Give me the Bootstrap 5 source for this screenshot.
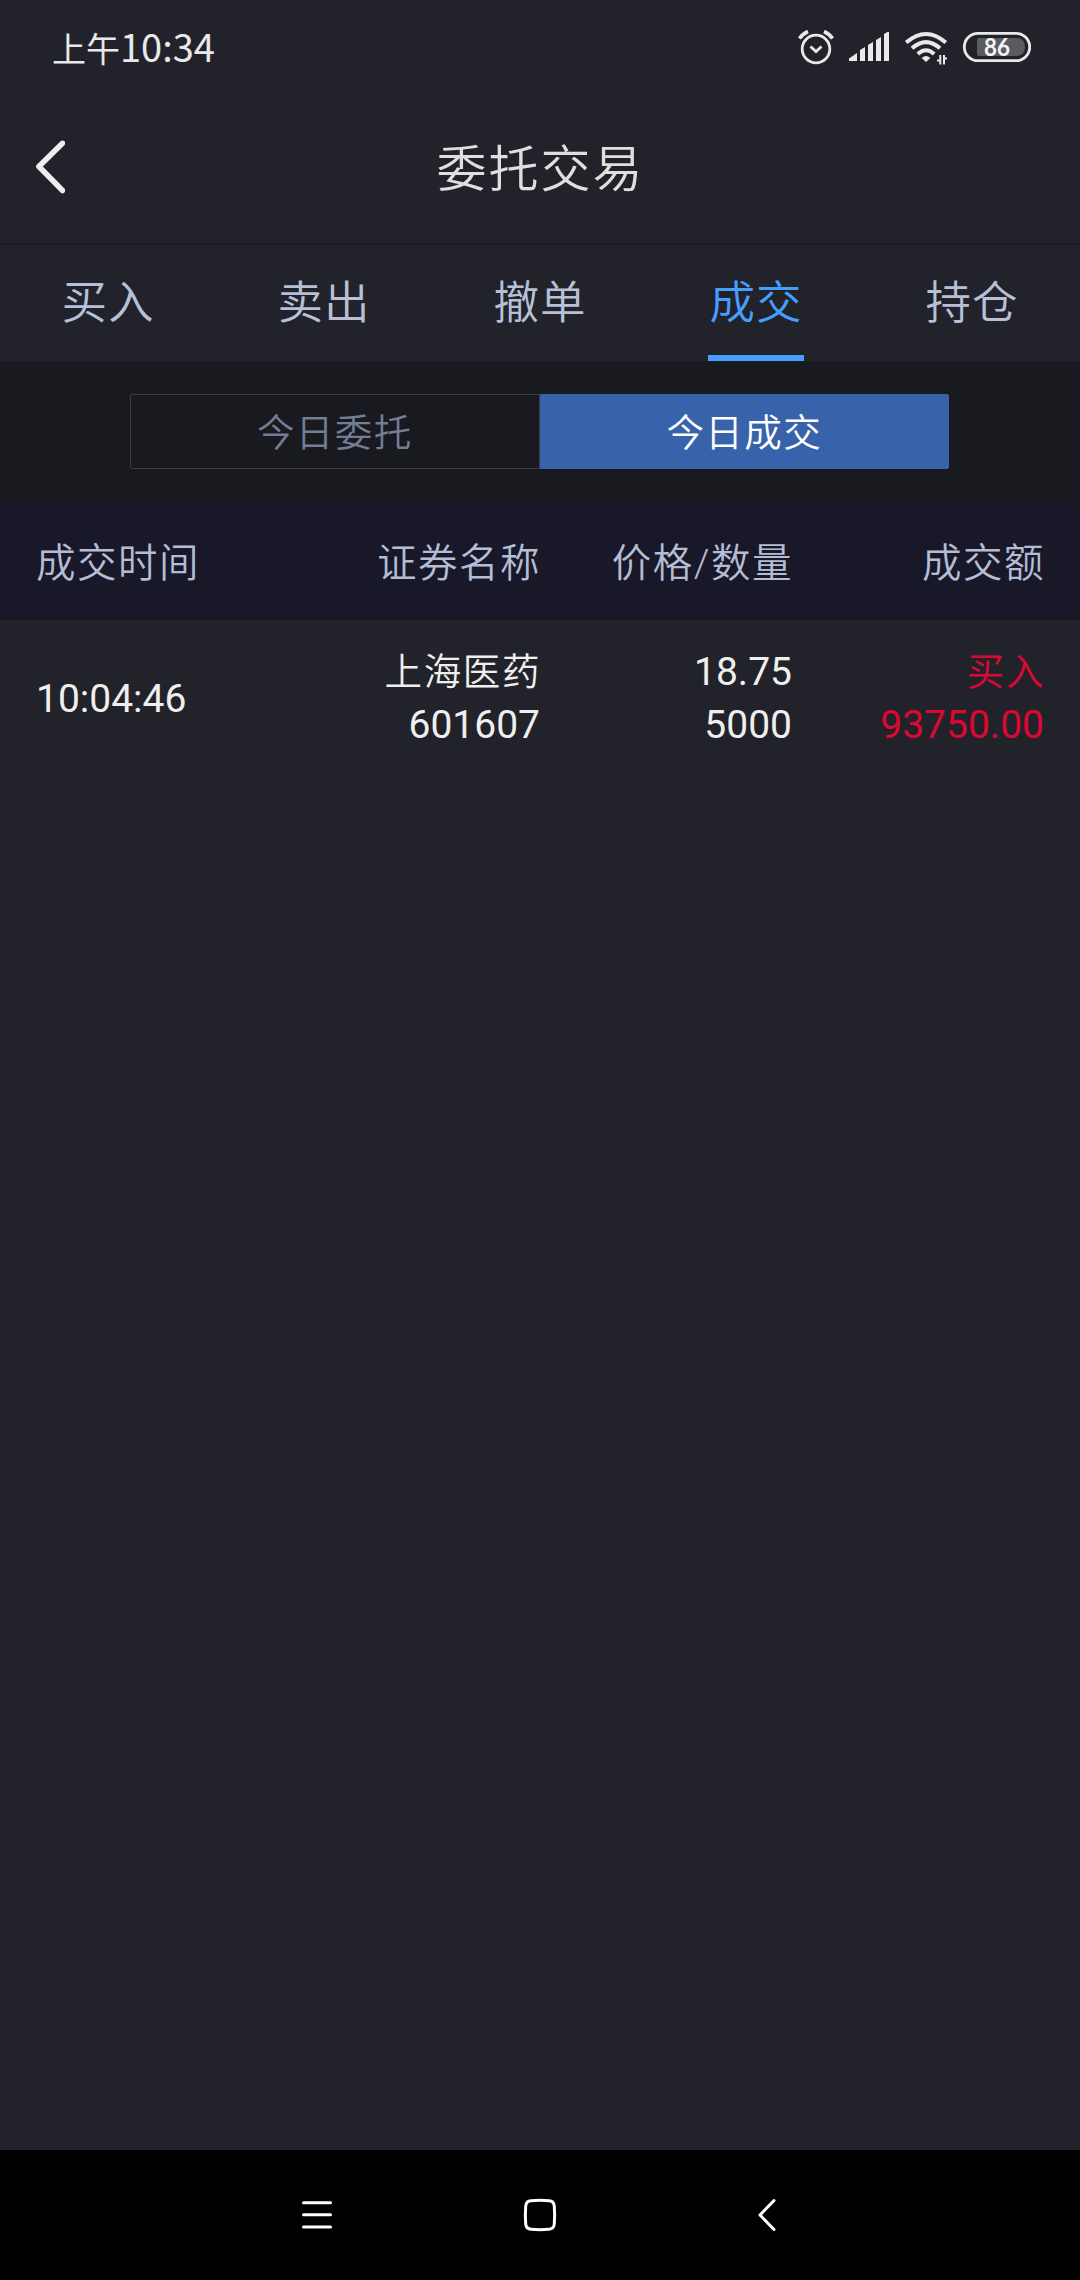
<!DOCTYPE html>
<html lang="zh-CN">
<head>
<meta charset="utf-8">
<meta name="viewport" content="width=device-width, initial-scale=1">
<title>委托交易</title>
<link href="https://cdn.jsdelivr.net/npm/bootstrap@5.3.0/dist/css/bootstrap.min.css" rel="stylesheet">
<style>
  body { background: #22222b; font-family: Roboto, "Noto Sans CJK SC", sans-serif; color: #eee; }
  .screen { width: 1080px; height: 2280px; overflow: hidden; }
  svg { display: block; flex: none; }
  .status-bar { height: 90px; padding: 5px 49px 0 52px; color: #e9e9e9; }
  .clock { font: 400 38px/60px "Noto Sans CJK SC", sans-serif; margin-top: -1px; }
  .clock-cn { font-size: 34px; }
  .title-bar { height: 155px; border-bottom: 2px solid #1b1b22; padding: 0 36px; }
  .title-bar h1 { font-size: 50px; letter-spacing: 2px; line-height: 60px; font-weight: 350; color: #dfdfde; padding: 7px 28px 0 0; }
  .main-tabs { height: 116px; }
  .main-tabs .nav-link { flex: 0 0 96px; padding: 8px 0 0; height: 116px; font-size: 45.5px; letter-spacing: 1px; line-height: 60px; font-weight: 350; color: #b6c0d8; border-bottom: 6px solid transparent; white-space: nowrap; }
  .main-tabs .nav-link.active { color: #459fff; border-color: #459fff; }
  .segment-area { background: #191a1f; height: 142px; padding: 32px 131px 33px 130px; border-top: 1px solid #1c1c24; }
  .segment { height: 75px; }
  .segment .btn { flex: 1; padding: 4px 0 0; font-size: 37.5px; letter-spacing: 1.4px; line-height: 69px; font-weight: 350; border: 1px solid #3b3c45; color: #737d95; border-radius: 2px 0 0 2px; }
  .segment .btn.active { background: #3863ab; border-color: #3863ab; color: #fff; border-radius: 0 2px 2px 0; }
  .table-head { height: 117px; background: #181829; color: #b3bdd5; padding: 4px 36px 0; font-size: 39.5px; letter-spacing: 1.5px; font-weight: 350; }
  .table-head .text-end { margin-right: -1px; }
  .trade { padding: 26px 36px 0; font-size: 39px; line-height: 53px; color: #efefee; }
  .trade .cn { font-size: 37.5px; letter-spacing: 1.6px; font-weight: 350; margin-right: -1px; }
  .trade .buy { color: #dd0831; }
  .sys-nav { height: 130px; background: #000; }
</style>
<script src="https://cdn.jsdelivr.net/npm/bootstrap@5.3.0/dist/js/bootstrap.bundle.min.js"></script>
</head>
<body>
<div class="screen d-flex flex-column">
  <header class="status-bar d-flex align-items-center justify-content-between">
    <div class="clock d-flex align-items-baseline"><span class="clock-cn">上午</span><span>10:34</span></div>
    <svg width="236" height="48" viewBox="795 24 236 48" fill="none" stroke="#e9e9e9">
      <circle cx="816" cy="49" r="13.8" stroke-width="2.8"/>
      <path d="M799.500 38.500Q802.500 34 808 31.500M832.500 38.500Q829.500 34 824 31.500" stroke-width="3.600"/>
      <path d="M810.500 46.500L816 51.500L821.500 46.500" stroke-width="2.800"/>
      <path fill="#e9e9e9" stroke="none" d="M849 61V58.500L857 53V61ZM860 61V50L865 47V61ZM868 61V45L873 42V61ZM876 61V40L881 37V61ZM884 61V34L887.500 32H889V61Z"/>
      <path d="M906.200 42.500Q926 25.500 945.800 42.500M912 48.300Q926 36 940 48.300M917.800 54Q926 46.500 934.200 54" stroke-width="4"/>
      <path fill="#e9e9e9" stroke="none" d="M926 62L921.700 58Q926 54 930.300 58Z"/>
      <path d="M940.300 55V64.500M944 55V64.500" stroke-width="2"/>
      <path d="M937 60.500H940M944.300 58.500H947" stroke-width="2"/>
      <rect x="964.300" y="33.300" width="65.400" height="27.400" rx="13.700" stroke-width="2.800"/>
      <path fill="#5b5b62" stroke="none" d="M977 40Q977 38 979 38H1016Q1025 38 1025 47T1016 56H979Q977 56 977 54Z"/>
      <text x="997" y="56" fill="#f4f4f4" stroke="none" text-anchor="middle" font-family="Lato, sans-serif" font-weight="700" font-size="25" textLength="26" lengthAdjust="spacingAndGlyphs">86</text>
    </svg>
  </header>

  <div class="title-bar d-flex align-items-center">
    <svg width="29" height="54" viewBox="36 139 29 54" fill="none" stroke="#eee" stroke-width="5.500" stroke-linecap="round" stroke-linejoin="round"><path d="M62.500 142.300L38.900 165.500L62.500 189.500"/></svg>
    <h1 class="flex-grow-1 text-center mb-0">委托交易</h1>
  </div>

  <nav class="main-tabs nav nav-fill">
    <div class="nav-item d-flex justify-content-center"><a class="nav-link d-flex align-items-center justify-content-center">买入</a></div>
    <div class="nav-item d-flex justify-content-center"><a class="nav-link d-flex align-items-center justify-content-center">卖出</a></div>
    <div class="nav-item d-flex justify-content-center"><a class="nav-link d-flex align-items-center justify-content-center">撤单</a></div>
    <div class="nav-item d-flex justify-content-center"><a class="nav-link active d-flex align-items-center justify-content-center">成交</a></div>
    <div class="nav-item d-flex justify-content-center"><a class="nav-link d-flex align-items-center justify-content-center">持仓</a></div>
  </nav>

  <div class="segment-area">
    <div class="segment d-flex">
      <button class="btn" type="button">今日委托</button>
      <button class="btn active" type="button">今日成交</button>
    </div>
  </div>

  <div class="table-head">
    <div class="row g-0 h-100 align-items-center">
      <div class="col-3">成交时间</div>
      <div class="col-3"><div class="text-end">证券名称</div></div>
      <div class="col-3"><div class="text-end">价格/数量</div></div>
      <div class="col-3"><div class="text-end">成交额</div></div>
    </div>
  </div>

  <main class="flex-grow-1">
    <div class="trade row g-0 align-items-center">
      <div class="col-3">10:04:46</div>
      <div class="col-3 text-end"><div class="cn">上海医药</div><div>601607</div></div>
      <div class="col-3 text-end"><div>18.75</div><div>5000</div></div>
      <div class="col-3 text-end buy"><div class="cn">买入</div><div>93750.00</div></div>
    </div>
  </main>

  <footer class="sys-nav d-flex justify-content-center align-items-center">
    <svg width="480" height="40" viewBox="300 2195 480 40" fill="none" stroke="#fff" stroke-width="3" stroke-linecap="round" stroke-linejoin="round">
      <path d="M303.500 2202.700H330.500M303.500 2214.800H330.500M303.500 2226.900H330.500"/>
      <path d="M531 2200.700Q540 2200 549 2200.700Q553.800 2201 554.300 2206Q555 2215 554.300 2224Q553.800 2229 549 2229.300Q540 2230 531 2229.300Q526.200 2229 525.700 2224Q525 2215 525.700 2206Q526.200 2201 531 2200.700Z"/>
      <path d="M774 2200.500L760 2215L774 2229.500"/>
    </svg>
  </footer>
</div>
</body>
</html>
